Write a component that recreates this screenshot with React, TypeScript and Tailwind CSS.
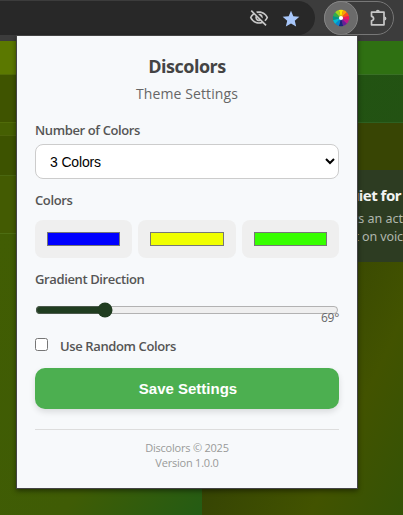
import React from "react";

const wheel = ["#ffe600", "#ffa000", "#ff4a1c", "#f0145a", "#c4148c", "#6a1b9a", "#1a237e", "#0288d1", "#00bcd4", "#009688", "#2eaf4d", "#a4d61c"];

function ColorWheel() {
  const point = (r: number, deg: number) => {
    const a = ((deg - 90) * Math.PI) / 180;
    return `${9 + r * Math.cos(a)} ${9 + r * Math.sin(a)}`;
  };
  return (
    <svg width="18" height="18" viewBox="0 0 18 18">
      {wheel.map((c, i) => (
        <path key={c} fill={c} d={`M9 9L${point(8.2, i * 30 - 15)}A8.2 8.2 0 0 1 ${point(8.2, i * 30 + 15)}Z`} />
      ))}
      <circle cx="9" cy="9" r="2.1" fill="#fff" />
    </svg>
  );
}

function Toolbar() {
  return (
    <div className="flex h-[41px] items-start bg-[#3c3c3c] pt-px">
      <div className="flex h-[34px] w-[315px] items-center justify-end gap-[12px] rounded-r-full bg-[#282828] pr-[14px]">
        <svg width="20" height="20" viewBox="0 0 24 24" fill="#c7c7c7">
          <path d="M12 6a9.77 9.77 0 0 1 8.82 5.5 9.65 9.65 0 0 1-2.41 3.12l1.41 1.41c1.39-1.23 2.49-2.77 3.18-4.53C21.27 7.11 17 4 12 4c-1.27 0-2.49.2-3.64.57l1.65 1.65C10.66 6.09 11.32 6 12 6Zm-1.07 1.14L13 9.21c.57.25 1.03.71 1.28 1.28l2.07 2.07c.08-.34.14-.7.14-1.07A4.48 4.48 0 0 0 12 7.01c-.37 0-.72.05-1.07.13ZM2.01 3.87l2.68 2.68A11.74 11.74 0 0 0 1 11.5C2.73 15.89 7 19 12 19c1.52 0 2.98-.29 4.32-.82l3.42 3.42 1.41-1.41L3.42 2.45 2.01 3.87Zm7.5 7.5 2.61 2.61c-.04.01-.08.02-.12.02a2.5 2.5 0 0 1-2.5-2.5c0-.05.01-.08.01-.13Zm-3.4-3.4 1.75 1.75a4.6 4.6 0 0 0-.36 1.78 4.49 4.49 0 0 0 6.27 4.14l.98.98c-.88.24-1.8.38-2.75.38a9.77 9.77 0 0 1-8.82-5.5 9.9 9.9 0 0 1 2.93-3.53Z" />
        </svg>
        <svg className="mt-px" width="20" height="20" viewBox="0 0 24 24" fill="#a8c7fa">
          <path d="M12 17.27 18.18 21l-1.64-7.03L22 9.24l-7.19-.61L12 2 9.19 8.63 2 9.24l5.46 4.73L5.82 21z" />
        </svg>
      </div>
      <div className="ml-[9px] flex h-[34px] w-[70px] items-center rounded-full border border-[#777]">
        <div className="-ml-px flex size-[34px] shrink-0 items-center justify-center rounded-full border border-[#858585] bg-[#6b6b6b]">
          <ColorWheel />
        </div>
        <svg className="mt-[-1px] ml-[10px]" width="20" height="20" viewBox="0 0 20 20" fill="none" stroke="#c7c7c7" strokeWidth="1.7" strokeLinejoin="round">
          <path d="M3.5 4.2H16v12.6H3.5v-4c2.8-.4 2.8-4.1 0-4.5z" />
          <path d="M7.8 3.8a2 2 0 0 1 4 0zM16.4 8.5a2 2 0 0 1 0 4z" fill="#c7c7c7" stroke="none" />
        </svg>
      </div>
    </div>
  );
}

function PageBehind() {
  return (
    <div className="flex h-[474px]">
      <div className="flex w-[202px] flex-col bg-[#3d5c05]">
        <div className="h-[33px] bg-[#5b7800]" />
        <div className="h-[48px] border-t border-[#516b06] bg-[#3f5400]" />
        <div className="h-[13px] border-t border-[#506b09] bg-[#455f02]" />
        <div className="h-[40px] border-t border-[#4c620b] bg-[#3d5300]" />
        <div className="h-[58px] border-t border-[#4a6610] bg-[#435b02]" />
        <div className="flex-1 border-t border-[#4d6d12] bg-[linear-gradient(125deg,#415d03_0%,#3f5c05_65%,#245c14_100%)]" />
      </div>
      <div className="flex w-[201px] flex-col bg-[linear-gradient(115deg,#303c05_0%,#344204_45%,#425300_78%,#345306_100%)]">
        <div className="h-[33px] bg-[#2f7012]" />
        <div className="h-[48px] border-t border-[#397025] bg-[linear-gradient(120deg,#205610,#235213)]" />
        <div className="h-[48px] border-t border-[#2d6021] bg-[#384504]" />
        <div className="h-[92px] overflow-hidden bg-[#2d3c22] pt-[15px] font-['Noto_Sans',sans-serif] whitespace-nowrap">
          <div className="pr-[2px] text-right text-[15px] leading-[20px] font-bold tracking-[-0.5px] text-[#f2f3f2]">It's quiet for</div>
          <div className="mt-[5px] text-right text-[12.5px] leading-[18px] text-[#b0b7ad]">When a friend starts an act</div>
          <div className="text-right text-[12.5px] leading-[18px] tracking-[-0.1px] text-[#b0b7ad]">hanging out on voic</div>
        </div>
      </div>
    </div>
  );
}

const label = "text-[13px] leading-[18px] font-semibold tracking-[-0.38px] text-[#555]";

function Popup() {
  return (
    <div className="absolute top-[35px] left-[16px] h-[454px] w-[342px] border border-[#444] bg-[#f7f9fb] px-[18px] pt-[17px] font-['Open_Sans',sans-serif] shadow-[0_2px_5px_rgba(0,0,0,0.45)]">
      <h1 className="text-center text-[18px] leading-[26px] font-bold tracking-[-0.5px] text-[#444]">Discolors</h1>
      <p className="mt-[4px] text-center text-[14px] leading-[22px] tracking-[0.1px] text-[#666]">Theme Settings</p>

      <div className={`mt-[16px] ${label}`}>Number of Colors</div>
      <select className="mt-[5px] block h-[35px] w-full appearance-auto rounded-[8px] border border-[#ccc] bg-white px-[10px] font-['Liberation_Sans',sans-serif] text-[14px] tracking-[-0.15px] text-black">
        <option>3 Colors</option>
      </select>

      <div className={`mt-[12px] ${label}`}>Colors</div>
      <div className="mt-[11px] grid grid-cols-3 gap-[6px]">
        {["#0000ff", "#f0ff00", "#37ff00"].map((color) => (
          <input key={color} type="color" defaultValue={color} className="h-[38px] w-full appearance-auto rounded-[8px] border-0 bg-[#efefef] px-[10px] py-[8px]" />
        ))}
      </div>

      <div className={`mt-[12px] ${label}`}>Gradient Direction</div>
      <input type="range" min="0" max="320" defaultValue="69" className="mt-[14px] block h-[16px] w-full accent-[#203d20]" />
      <div className="-mt-[8px] text-right text-[12px] leading-[16px] tracking-[-0.3px] text-[#666]">69°</div>

      <label className="mt-[10px] flex h-[20px] items-center">
        <input type="checkbox" className="mt-[-3px] size-[13px]" />
        <span className={`ml-[12px] ${label}`}>Use Random Colors</span>
      </label>

      <button className="mt-[12px] block h-[41px] w-full rounded-[10px] bg-[#4caf50] font-['Liberation_Sans',sans-serif] text-[15px] font-bold text-white shadow-[0_3px_6px_rgba(0,0,0,0.12)]">
        <span className="relative top-px left-px">Save Settings</span>
      </button>

      <div className="mt-[20px] border-t border-[#ddd] pt-[10px] text-center text-[11px] leading-[15px] tracking-[-0.22px] text-[#999]">
        Discolors © 2025
        <br />
        Version 1.0.0
      </div>
    </div>
  );
}

export default function App() {
  return (
    <div className="relative h-[515px] w-[403px] overflow-hidden">
      <Toolbar />
      <PageBehind />
      <Popup />
    </div>
  );
}
